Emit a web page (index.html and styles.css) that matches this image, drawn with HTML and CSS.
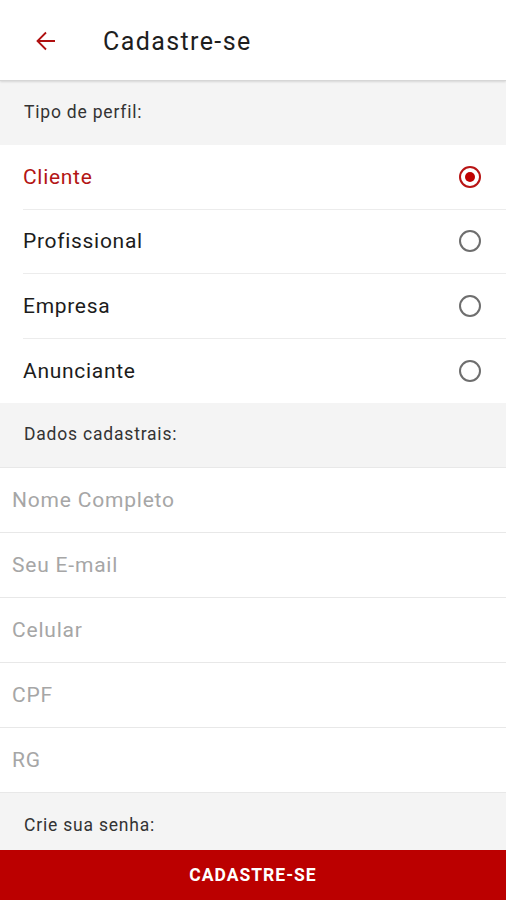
FILE: index.html
```html
<!DOCTYPE html>
<html lang="pt-BR">
<head>
<meta charset="utf-8">
<title>Cadastre-se</title>
<link rel="stylesheet" href="styles.css">
</head>
<body>
<div class="screen">
  <header class="appbar">
    <svg class="back" width="24" height="24" viewBox="0 0 24 24" aria-hidden="true">
      <path d="M21 12H3.5M12 3.5L3.5 12L12 20.5" fill="none" stroke="#b01010" stroke-width="1.8"/>
    </svg>
    <h1 class="title">Cadastre-se</h1>
  </header>
  <main class="content">
    <div class="section">Tipo de perfil:</div>
    <ul class="options">
      <li class="option selected"><span>Cliente</span><span class="radio on"></span></li>
      <li class="option"><span>Profissional</span><span class="radio"></span></li>
      <li class="option"><span>Empresa</span><span class="radio"></span></li>
      <li class="option"><span>Anunciante</span><span class="radio"></span></li>
    </ul>
    <div class="section">Dados cadastrais:</div>
    <div class="fields">
      <div class="field">Nome Completo</div>
      <div class="field">Seu E-mail</div>
      <div class="field">Celular</div>
      <div class="field">CPF</div>
      <div class="field">RG</div>
    </div>
    <div class="section last">Crie sua senha:</div>
  </main>
  <button class="submit">CADASTRE-SE</button>
</div>
</body>
</html>
```

FILE: styles.css
```css
* { box-sizing: border-box; }
html, body { margin: 0; padding: 0; }
body {
  font-family: Roboto, "Noto Sans", sans-serif;
  background: #fff;
  width: 506px;
  height: 900px;
  overflow: hidden;
}
.screen {
  display: flex;
  flex-direction: column;
  height: 900px;
}
.appbar {
  height: 81px;
  display: flex;
  align-items: center;
  padding-left: 34px;
  background: #fff;
  border-bottom: 1px solid #d6d6d6;
  box-shadow: 0 1px 2px rgba(0,0,0,0.12);
  position: relative;
  z-index: 1;
  flex: none;
}
.back { width: 24px; height: 24px; margin-top: 2px; }
.title {
  margin: 0 0 0 45px;
  font-size: 25px;
  letter-spacing: 1.4px;
  font-weight: 400;
  color: #1e1e1e;
  padding-top: 2px;
}
.content { flex: 1; display: flex; flex-direction: column; }
.section {
  height: 64px;
  background: #f4f4f4;
  color: #333;
  font-size: 17.5px;
  letter-spacing: 0.8px;
  display: flex;
  align-items: center;
  padding-left: 24px;
  padding-bottom: 2px;
}
.section.last { height: 57px; padding-top: 9px; }
.options { list-style: none; margin: 0; padding: 0 0 0 23px; }
.option {
  height: 64.5px;
  display: flex;
  align-items: center;
  justify-content: space-between;
  padding-right: 25px;
  font-size: 21px;
  letter-spacing: 0.7px;
  color: #1c1c1c;
  border-bottom: 1.5px solid #ececec;
}
.option:last-child { border-bottom: none; }
.option.selected { color: #b31515; }
.radio {
  width: 22px;
  height: 22px;
  border-radius: 50%;
  border: 2px solid #6e6e6e;
  display: flex;
  align-items: center;
  justify-content: center;
}
.radio.on { border-color: #b81414; }
.radio.on::after {
  content: "";
  width: 10px;
  height: 10px;
  border-radius: 50%;
  background: #c00000;
}
.field {
  height: 65px;
  display: flex;
  align-items: center;
  padding-left: 12px;
  font-size: 21px;
  letter-spacing: 0.8px;
  color: #a6a6a6;
  border-top: 1.5px solid #e8e8e8;
}
.fields { border-bottom: 1.5px solid #e8e8e8; }
.submit {
  flex: none;
  height: 50px;
  border: none;
  margin: 0;
  background: #bb0000;
  color: #fff;
  font-family: Roboto, "Noto Sans", sans-serif;
  font-size: 17.5px;
  letter-spacing: 1px;
  font-weight: 700;
  width: 100%;
  padding: 0;
}
```
